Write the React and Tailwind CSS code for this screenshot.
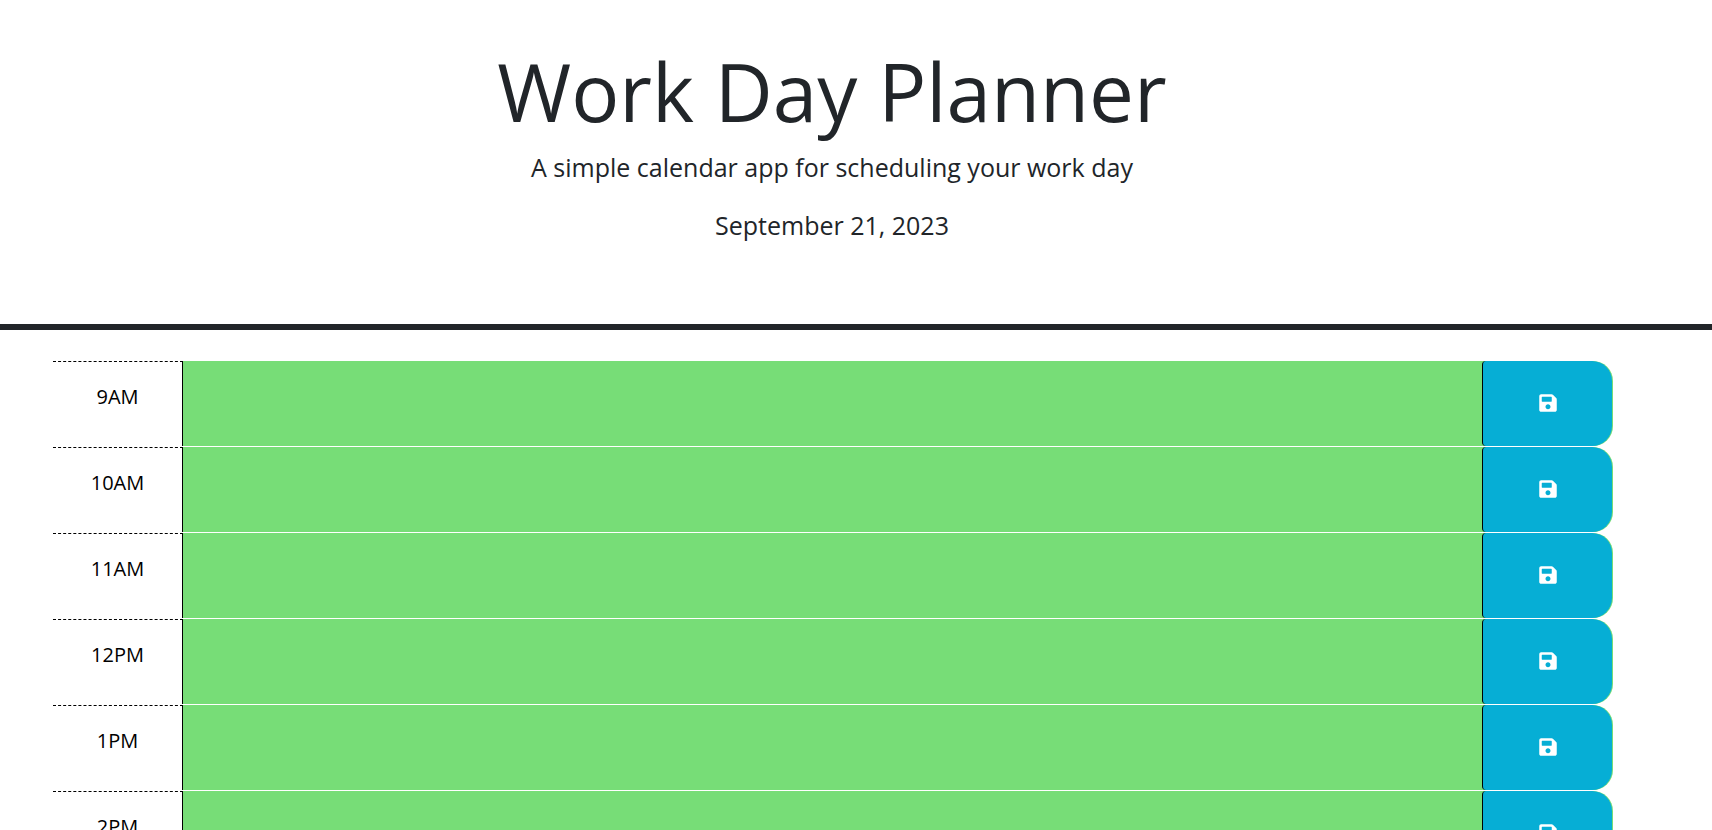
import { FaSave } from "react-icons/fa";

const HOURS = ["9AM", "10AM", "11AM", "12PM", "1PM", "2PM"];

function TimeBlock({ hour }) {
  const id = `hour-${hour}`;
  return (
    <div className="mb-px grid h-[85px] grid-cols-12 rounded-r-[20px] bg-[#77dd77]">
      <label
        htmlFor={id}
        className="border-t border-r border-dashed border-black bg-white pt-5 text-center text-xl leading-[30px] text-black [border-right-style:solid]"
      >
        {hour}
      </label>
      <textarea
        id={id}
        className="col-span-10 resize-none border-none bg-transparent p-2 text-xl text-black outline-none"
      />
      <button
        type="button"
        aria-label={`Save ${hour}`}
        className="mr-px -ml-px flex items-center justify-center rounded-l-[4px] rounded-r-[20px] border-l border-black bg-[#06aed5] pb-px text-xl text-white hover:bg-[#0599bc]"
      >
        <FaSave aria-hidden="true" />
      </button>
    </div>
  );
}

export default function App() {
  return (
    <div className="h-screen overflow-y-auto bg-white font-['Open_Sans',sans-serif] text-[#212529] [scrollbar-width:none]">
      <header className="border-b-[6px] border-[#212529] pt-[43px] pr-12 pb-20 text-center">
        <h1 className="mb-[9px] text-[80px] leading-[96px] font-normal">Work Day Planner</h1>
        <p className="mb-5 text-[25px] leading-[38px]">
          A simple calendar app for scheduling your work day
        </p>
        <p className="text-[25px] leading-[38px]">September 21, 2023</p>
      </header>
      <main className="pt-[31px] pr-[99px] pl-[53px]">
        {HOURS.map((hour) => (
          <TimeBlock key={hour} hour={hour} />
        ))}
      </main>
    </div>
  );
}
